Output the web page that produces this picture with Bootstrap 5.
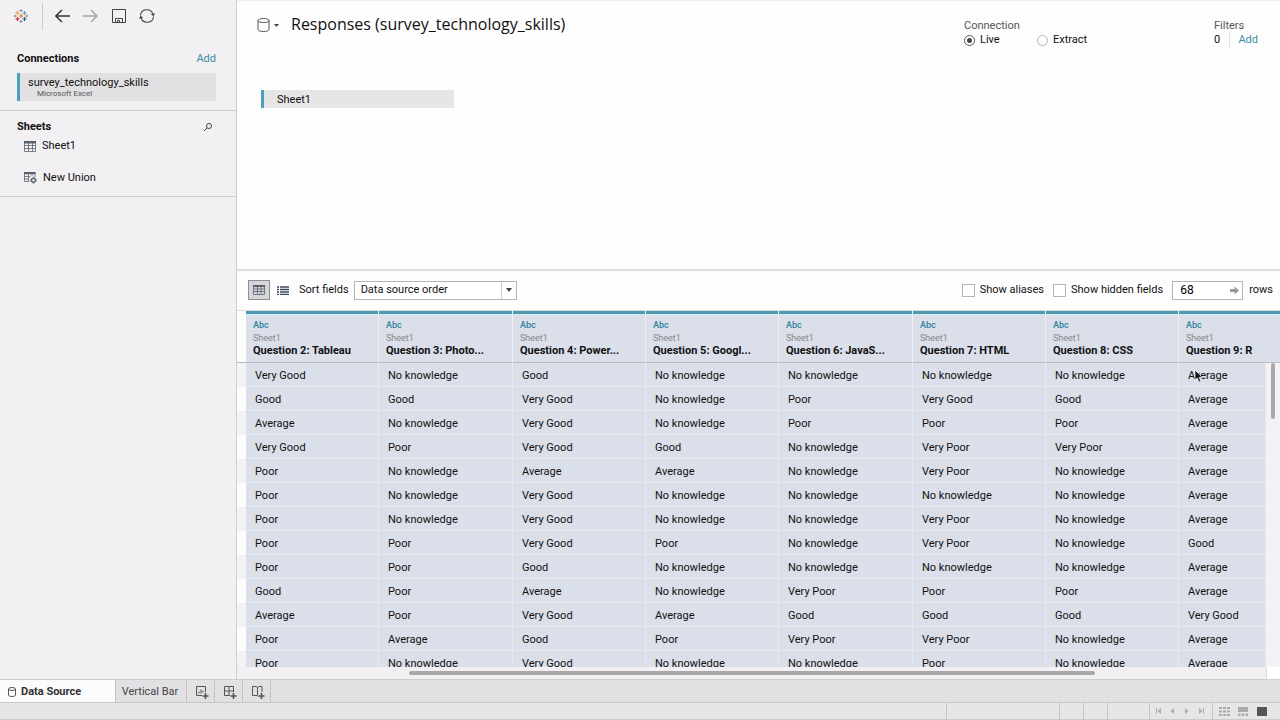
<!DOCTYPE html>
<html lang="en">
<head>
<meta charset="utf-8">
<meta name="viewport" content="width=device-width, initial-scale=1">
<title>Responses (survey_technology_skills)</title>
<link href="https://cdn.jsdelivr.net/npm/bootstrap@5.3.0/dist/css/bootstrap.min.css" rel="stylesheet">
<style>
body{font-family:Roboto,"Liberation Sans",sans-serif;font-size:11px;line-height:16px;color:#111;background:#fdfdfd}
a{color:#3c8ba3;text-decoration:none}
svg{display:block;flex:none}
button{padding:0;border:0;background:none;color:inherit}
h1{font-family:"Open Sans",sans-serif;font-size:16px;line-height:20px;font-weight:400;margin:0}
h2{font-size:11px;line-height:16px;font-weight:700;margin:0}
.side{width:237px;background:#f2f0f3;border-right:1px solid #cfcdd0}
.tools{height:32px;padding-left:14px;color:#333}
.tools .rule{width:1px;height:27px;background:#ccc;margin-left:14px}
.conn-box{margin-top:19px;padding:0 20px 9px 17px;border-bottom:1px solid #d0ced1}
.source{background:#e2e0e3;border-left:3px solid #4e9fbd;margin-top:6px;height:28px;padding:3px 0 0 8px}
.source span{display:block;line-height:14px}
.source small{display:block;font-size:8px;line-height:8px;padding-left:9px;color:#555}
.sheet-box{padding:8px 23px 10px 17px;border-bottom:1px solid #d0ced1}
.sheet-item{gap:6px;padding-left:7px;height:16px;margin-top:3px}
.sheet-item+.sheet-item{margin-top:16px}
.canvas{height:271px;border-top:1px solid #eee;border-bottom:2px solid #dedede;padding:13px 22px 0 20px}
.chip{width:193px;height:18px;background:#e6e6e6;border-left:3px solid #4e9fbd;padding-left:13px;line-height:20px;margin:43px 0 0 4px}
.muted{color:#555}
input[type=radio],input[type=checkbox]{appearance:none;background:#fff;border:1px solid #b5b5b5;margin:0;flex:none}
input[type=radio]{width:11px;height:11px;border-radius:50%}
input[type=radio]:checked{border-color:#555;background:radial-gradient(#444 0 2px,#fff 3px)}
input[type=checkbox]{width:13px;height:13px}
.conn-mode{width:250px;line-height:14px;padding-top:5px}
.conn-mode label{width:73px;gap:5px}
.filters{width:44px;line-height:14px;padding-top:5px}
.sortbar{height:40px;padding:0 7px 1px 11px;border-bottom:1px solid #ddd}
.sortbar label{gap:5px}
.mode{width:22px;height:20px;display:grid;place-items:center}
.mode.on{background:#d6d5da;border:1px solid #8f8f93;margin-right:2px}
.sort-label{margin:0 5px}
.hidden-opt{margin:0 9px}
.rows-label{margin-left:6px}
.order{width:163px;height:19px;border:1px solid #b5b5b5;border-radius:0;appearance:none;padding:0 6px;font-size:11px;line-height:16px;background:#fff;color:#111}
.arrow{position:absolute;right:1px;top:1px;width:15px;height:17px;border-left:1px solid #ccc;display:grid;place-items:center;pointer-events:none;background:#fff}
.count{width:71px;height:19px;border:1px solid #b5b5b5;padding:0 7px;background:#fff;font-size:12px}
.go{position:absolute;right:4px;top:5px}
.grid-area{min-height:0;overflow:hidden}
.grid{width:100%;table-layout:fixed;border-collapse:separate;border-spacing:0}
.grid th{height:52px;background:#dadfe9;border-right:1px solid #eef2f7;border-bottom:1px solid #b9bcc4;padding:8px 0 0 7px;vertical-align:top;box-shadow:inset 0 3px #4b98b0,inset 0 4px #d5eef7;line-height:12px;white-space:nowrap;font-weight:700}
.grid th:first-child{background:#fdfdfd;border-right:0;padding:0;box-shadow:none}
.grid th:last-child{border-right:0}
.grid th small{display:block;font-size:9px;font-weight:400;line-height:13px;color:#888}
.grid th .kind{color:#3083a0;font-size:9px;font-weight:500}
.grid td{height:24px;background:#dadfe9;border-right:1px solid #e4e9f0;border-bottom:1px solid #e6ebf2;padding:2px 0 0 9px;white-space:nowrap}
.grid tr td:first-child{background:#fdfdfd;border:0;padding:0}
.grid tr:nth-child(odd) td:first-child{background:#f3f2f4}
.grid tr .track{background:#f4f2f5;border:0;vertical-align:top;padding:0 0 0 5px}
.vthumb{width:4px;height:56px;border-radius:2px;background:#aaa8ab}
.hscroll{height:12px;background:#f2f0f3;padding:4px 0}
.hthumb{height:4px;border-radius:2px;background:#a9a7aa}
.corner{width:14px;background:#fff;border-left:1px solid #ddd;margin:-4px 0}
.pointer{position:absolute;left:15px;top:6px}
.tabs{height:24px;background:#e2e0e3;border-top:1px solid #cfcdd0;border-bottom:1px solid #c8c6c9;color:#444}
.tabs button{border-right:1px solid #c4c2c5;padding-top:2px}
.tabs .act{width:116px;background:#fbfafc;gap:5px;padding-left:8px;color:#333}
.tabs .vbar{width:71px;padding-right:2px}
.tabs .add{width:28px;padding-left:8px}
.status{height:17px;background:#e6e6e6;border-bottom:1px solid #ccc}
.status>div{border-left:1px solid #c4c4c4;height:100%}
.views{padding-left:6px}
</style>
</head>
<body>
<div class="d-flex flex-column vh-100 overflow-hidden">
<div class="d-flex flex-grow-1 grid-area">
 <aside class="side flex-shrink-0">
  <div class="tools d-flex align-items-center">
   <svg width="14" height="14" viewBox="0 0 14 14" fill="none" stroke-width="1.200"><path d="M7 5v4M5 7h4" stroke="#e8762c"/><path d="M3.500 2v4M1.500 4h4" stroke="#e8a13b"/><path d="M10.500 2v4M8.500 4h4" stroke="#6b9a9a"/><path d="M3.500 8v4M1.500 10h4" stroke="#c72b42"/><path d="M10.500 8v4M8.500 10h4" stroke="#35567f"/><path d="M7 0v3M5.500 1.500h3M0 7h2.500M1.200 5.800v2.400M7 11v3M5.500 12.500h3M11.500 7H14M12.800 5.800v2.400" stroke="#6f7196" stroke-width=".8"/></svg>
   <span class="rule"></span>
   <button class="ms-2 ps-1" aria-label="Back"><svg width="16" height="14" viewBox="0 0 16 14" fill="none" stroke="#333" stroke-width="1.500"><path d="M15 7H.8M7 1L.8 7 7 13"/></svg></button>
   <button class="ms-2 ps-1" aria-label="Forward"><svg width="16" height="14" viewBox="0 0 16 14" fill="none" stroke="#a5a5a5" stroke-width="1.500"><path d="M0 7h14M8 1l6 6-6 6"/></svg></button>
   <button class="ms-2 ps-1" aria-label="Save"><svg width="16" height="14" viewBox="0 0 16 14" fill="none" stroke="#444"><path d="M1.500.5h13v13h-13zM4.500 13v-3.500h7V13M6.500 13v-1.500h2V13"/></svg></button>
   <button class="ms-2 ps-1" aria-label="Refresh"><svg width="16" height="14" viewBox="0 0 16 14" fill="none" stroke="#444" stroke-width="1.100"><path d="M1.500 6.500C2 -.5 12-1.500 14 5.500M14.500 7.500c-.5 7-10.500 8-12.500 1"/><path d="M11.800 5.200L14.500 7.200 16 4.200zM4.200 8.800L1.500 6.800 0 9.800z" fill="#444" stroke="none"/></svg></button>
  </div>
  <section class="conn-box">
   <div class="d-flex justify-content-between"><h2>Connections</h2><a href="#">Add</a></div>
   <div class="source"><span>survey_technology_skills</span><small>Microsoft Excel</small></div>
  </section>
  <section class="sheet-box">
   <div class="d-flex justify-content-between align-items-center"><h2>Sheets</h2><button aria-label="Search"><svg width="10" height="8" viewBox="0 0 10 8" fill="none" stroke="#444"><circle cx="6" cy="3" r="2.500"/><path d="M4 5L1 8"/></svg></button></div>
   <div class="sheet-item d-flex align-items-center"><svg width="12" height="11" viewBox="0 0 12 11"><path d="M.5.500h11v10H.5zM.5 4.500h11M.5 7.500h11M4.500 2v8M8.500 2v8" fill="none" stroke="#59636f" stroke-width=".8"/><path d="M0 0h12v2.500H0z" fill="#59636f"/></svg><span>Sheet1</span></div>
   <div class="sheet-item d-flex align-items-center"><svg width="13" height="12" viewBox="0 0 13 12"><path d="M11 5V.5H.5v9H5.500M.5 4.500h6M.5 7h4.500M4.500 2v7M8 2v2" fill="none" stroke="#59636f" stroke-width=".8"/><path d="M0 0h11.500v2.200H0z" fill="#59636f"/><circle cx="9.500" cy="8.200" r="2" fill="none" stroke="#59636f" stroke-width="1.400"/><path d="M9.500 4.800v1M9.500 10.500v1.200M6 8.200h1M12 8.200h1" stroke="#59636f"/></svg><span>New Union</span></div>
  </section>
 </aside>
 <main class="d-flex flex-column flex-grow-1 grid-area">
  <section class="canvas flex-shrink-0">
   <div class="d-flex align-items-start">
    <button class="d-flex align-items-center mt-1 me-2 pe-1 gap-1" aria-label="Data source menu"><svg width="13" height="14" viewBox="0 0 13 14" fill="none" stroke="#555"><ellipse cx="6.500" cy="2.500" rx="5.500" ry="2"/><path d="M1 2.500v9c0 2.700 11 2.700 11 0v-9"/></svg><svg width="5" height="3" viewBox="0 0 5 3"><path d="M0 0h5L2.500 3z" fill="#444"/></svg></button>
    <h1 class="flex-grow-1">Responses (survey_technology_skills)</h1>
    <div class="conn-mode">
     <div class="muted">Connection</div>
     <div class="d-flex"><label class="d-flex align-items-center"><input type="radio" name="mode" checked>Live</label><label class="d-flex align-items-center"><input type="radio" name="mode">Extract</label></div>
    </div>
    <div class="filters"><div class="muted">Filters</div><div class="d-flex justify-content-between">0<span class="border-start ps-2"><a href="#">Add</a></span></div></div>
   </div>
   <div class="chip">Sheet1</div>
  </section>
  <section class="sortbar d-flex align-items-center flex-shrink-0">
   <button class="mode on" aria-label="Grid view"><svg width="12" height="10" viewBox="0 0 12 10"><path d="M.5.500h11v9H.5zM.5 4h11M.5 6.500h11M4.500 2v7M8 2v7" fill="none" stroke="#59636f" stroke-width=".8"/><path d="M0 0h12v2H0z" fill="#59636f"/></svg></button>
   <button class="mode" aria-label="List view"><svg width="12" height="9" viewBox="0 0 12 9"><path d="M0 1h2M3 1h9M0 3.500h2M3 3.500h9M0 6h2M3 6h9M0 8.500h2M3 8.500h9" stroke="#3f4961" stroke-width="1.300"/></svg></button>
   <label for="order" class="sort-label">Sort fields</label>
   <div class="position-relative d-flex"><select id="order" class="order"><option>Data source order</option></select><span class="arrow"><svg width="6" height="4" viewBox="0 0 6 4"><path d="M0 0h6L3 4z" fill="#444"/></svg></span></div>
   <label class="d-flex align-items-center ms-auto"><input type="checkbox">Show aliases</label>
   <label class="d-flex align-items-center hidden-opt"><input type="checkbox">Show hidden fields</label>
   <div class="position-relative d-flex"><input id="rows" class="count" value="68"><svg class="go" width="9" height="9" viewBox="0 0 9 9"><path d="M0 3h4.500V.5L9 4.500l-4.500 4V6H0z" fill="#999"/></svg></div>
   <label for="rows" class="rows-label">rows</label>
  </section>
  <div class="grid-area flex-grow-1">
   <table class="grid">
    <colgroup><col style="width:9px"><col style="width:133px"><col style="width:134px"><col style="width:133px"><col style="width:133px"><col style="width:134px"><col style="width:133px"><col style="width:133px"><col><col style="width:14px"></colgroup>
    <thead><tr><th></th>
     <th><small class="kind">Abc</small><small>Sheet1</small>Question 2: Tableau</th>
     <th><small class="kind">Abc</small><small>Sheet1</small>Question 3: Photo...</th>
     <th><small class="kind">Abc</small><small>Sheet1</small>Question 4: Power...</th>
     <th><small class="kind">Abc</small><small>Sheet1</small>Question 5: Googl...</th>
     <th><small class="kind">Abc</small><small>Sheet1</small>Question 6: JavaS...</th>
     <th><small class="kind">Abc</small><small>Sheet1</small>Question 7: HTML</th>
     <th><small class="kind">Abc</small><small>Sheet1</small>Question 8: CSS</th>
     <th colspan="2"><small class="kind">Abc</small><small>Sheet1</small>Question 9: R</th></tr></thead>
    <tbody>
     <tr><td></td><td>Very Good</td><td>No knowledge</td><td>Good</td><td>No knowledge</td><td>No knowledge</td><td>No knowledge</td><td>No knowledge</td><td class="position-relative">Average<svg class="pointer" width="9" height="14" viewBox="0 0 9 14"><path d="M1 1v10l2.300-2 1.700 4 1.800-.8L5.200 8.300h3z" fill="#111" stroke="#fff" stroke-width=".7"/></svg></td><td class="track" rowspan="13"><div class="vthumb"></div></td></tr>
     <tr><td></td><td>Good</td><td>Good</td><td>Very Good</td><td>No knowledge</td><td>Poor</td><td>Very Good</td><td>Good</td><td>Average</td></tr>
     <tr><td></td><td>Average</td><td>No knowledge</td><td>Very Good</td><td>No knowledge</td><td>Poor</td><td>Poor</td><td>Poor</td><td>Average</td></tr>
     <tr><td></td><td>Very Good</td><td>Poor</td><td>Very Good</td><td>Good</td><td>No knowledge</td><td>Very Poor</td><td>Very Poor</td><td>Average</td></tr>
     <tr><td></td><td>Poor</td><td>No knowledge</td><td>Average</td><td>Average</td><td>No knowledge</td><td>Very Poor</td><td>No knowledge</td><td>Average</td></tr>
     <tr><td></td><td>Poor</td><td>No knowledge</td><td>Very Good</td><td>No knowledge</td><td>No knowledge</td><td>No knowledge</td><td>No knowledge</td><td>Average</td></tr>
     <tr><td></td><td>Poor</td><td>No knowledge</td><td>Very Good</td><td>No knowledge</td><td>No knowledge</td><td>Very Poor</td><td>No knowledge</td><td>Average</td></tr>
     <tr><td></td><td>Poor</td><td>Poor</td><td>Very Good</td><td>Poor</td><td>No knowledge</td><td>Very Poor</td><td>No knowledge</td><td>Good</td></tr>
     <tr><td></td><td>Poor</td><td>Poor</td><td>Good</td><td>No knowledge</td><td>No knowledge</td><td>No knowledge</td><td>No knowledge</td><td>Average</td></tr>
     <tr><td></td><td>Good</td><td>Poor</td><td>Average</td><td>No knowledge</td><td>Very Poor</td><td>Poor</td><td>Poor</td><td>Average</td></tr>
     <tr><td></td><td>Average</td><td>Poor</td><td>Very Good</td><td>Average</td><td>Good</td><td>Good</td><td>Good</td><td>Very Good</td></tr>
     <tr><td></td><td>Poor</td><td>Average</td><td>Good</td><td>Poor</td><td>Very Poor</td><td>Very Poor</td><td>No knowledge</td><td>Average</td></tr>
     <tr><td></td><td>Poor</td><td>No knowledge</td><td>Very Good</td><td>No knowledge</td><td>No knowledge</td><td>Poor</td><td>No knowledge</td><td>Average</td></tr>
    </tbody>
   </table>
  </div>
  <div class="hscroll d-flex flex-shrink-0"><div class="flex-grow-1"><div class="hthumb" style="width:66.7%;margin-left:16.7%"></div></div><div class="corner"></div></div>
 </main>
</div>
<nav class="tabs d-flex flex-shrink-0">
 <button class="act d-flex align-items-center fw-bold"><svg width="8" height="10" viewBox="0 0 8 10" fill="none" stroke="#444" stroke-width=".9"><ellipse cx="4" cy="2" rx="3.500" ry="1.500"/><path d="M.5 2v6c0 2 7 2 7 0V2"/></svg>Data Source</button>
 <button class="vbar">Vertical Bar</button>
 <button class="add" aria-label="New worksheet"><svg width="14" height="14" viewBox="0 0 14 14" fill="none" stroke="#555"><path d="M7 10.500H1.500v-9h9V7M4 8.500V6.500M6 8.500v-4M8 7.500v-2"/><path d="M7.500 11h6M10.500 8v6" stroke-width="1.600"/></svg></button>
 <button class="add" aria-label="New dashboard"><svg width="14" height="14" viewBox="0 0 14 14" fill="none" stroke="#555"><path d="M7 10.500H1.500v-9h9V7M1.500 6h9M6 1.500v9"/><path d="M7.500 11h6M10.500 8v6" stroke-width="1.600"/></svg></button>
 <button class="add" aria-label="New story"><svg width="14" height="14" viewBox="0 0 14 14" fill="none" stroke="#555"><path d="M7 11.500L6 10.500H1.500v-9H5l1.500 1 1.500-1h3V7M6.500 2.500v8"/><path d="M7.500 11h6M10.500 8v6" stroke-width="1.600"/></svg></button>
</nav>
<footer class="status d-flex justify-content-end flex-shrink-0">
 <div style="width:113px"></div><div style="width:24px"></div><div style="width:24px"></div><div style="width:42px"></div>
 <div class="d-flex align-items-center justify-content-center" style="width:63px"><svg width="50" height="6" viewBox="0 0 50 6" fill="#aaa"><path d="M0 0h1v6H0zM5 0v6L1.500 3zM18 0v6l-3.500-3zM29 0v6l3.500-3zM43 0v6l3.500-3zM47 0h1v6h-1z"/></svg></div>
 <div class="views d-flex align-items-center" style="width:68px"><svg width="48" height="9" viewBox="0 0 48 9" fill="#aaa"><path d="M0 0h3v2H0zM4 0h3v2H4zM8 0h3v2H8zM0 3.500h3v2H0zM4 3.500h3v2H4zM8 3.500h3v2H8zM0 7h3v2H0zM4 7h3v2H4zM8 7h3v2H8zM19 0h10v5H19zM19 6.500h2.500V9H19zM22.700 6.500h2.500V9h-2.500zM26.500 6.500H29V9h-2.500z"/><path d="M38 0h10v9H38z" fill="#555"/></svg></div>
</footer>
</div>
<script src="https://cdn.jsdelivr.net/npm/bootstrap@5.3.0/dist/js/bootstrap.bundle.min.js"></script>
</body>
</html>
